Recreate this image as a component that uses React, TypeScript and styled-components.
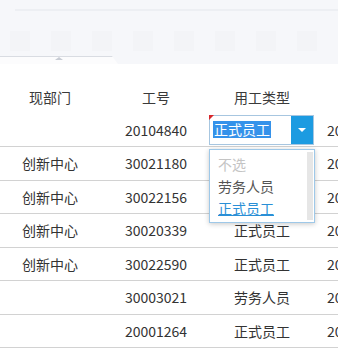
import React from "react";
import styled, { createGlobalStyle } from "styled-components";

const GlobalStyle = createGlobalStyle`
  html, body {
    margin: 0;
    padding: 0;
    background: #fff;
    overflow: hidden;
  }
  body {
    font-family: "Noto Sans CJK SC", "Noto Sans", sans-serif;
  }
`;

const Page = styled.div`
  width: 338px;
  height: 358px;
  overflow: hidden;
  display: flex;
  flex-direction: column;
`;

const TopBar = styled.div`
  height: 64px;
  background: #f6f7fa;
  display: flex;
  flex-direction: column;
  flex-shrink: 0;
`;

const TopLine = styled.div`
  margin: 9px 0 0 15px;
  height: 2px;
  background: #edeff3;
`;

const GhostRow = styled.div`
  display: flex;
  gap: 21px;
  padding: 20px 0 0 10px;
  height: 20px;
`;

const GhostBox = styled.div`
  width: 20px;
  height: 20px;
  background: #f3f4f7;
`;

const Tab = styled.div`
  margin-top: auto;
  width: 118px;
  height: 7px;
  background: #fcfcfd;
  border-top: 1px solid #d9dce2;
  clip-path: polygon(0 0, 112px 0, 118px 100%, 0 100%);
  display: flex;
  justify-content: center;
`;

const Caret = styled.div`
  width: 0;
  height: 0;
  border-left: 4px solid transparent;
  border-right: 4px solid transparent;
  border-bottom: 3px solid #c8ccd4;
`;

const Table = styled.div`
  margin: 16px 0 0 -3px;
  display: flex;
  flex-direction: column;
  font-size: 14px;
  color: #333;
`;

const Row = styled.div<{ $header?: boolean }>`
  display: grid;
  grid-template-columns: repeat(4, 106px);
  height: 33.5px;
  box-sizing: border-box;
  border-bottom: ${(p) => (p.$header ? "none" : "1px solid #d2d2d2")};
  color: ${(p) => (p.$header ? "#3a3a3a" : "#333")};
`;

const Cell = styled.div<{ $align?: "left" | "center" }>`
  position: relative;
  display: flex;
  align-items: center;
  justify-content: ${(p) => (p.$align === "left" ? "flex-start" : "center")};
  padding-left: ${(p) => (p.$align === "left" ? "12px" : "0")};
  white-space: nowrap;
  line-height: 20px;
`;

const Select = styled.div`
  position: absolute;
  left: 0;
  top: 1px;
  right: 1px;
  bottom: 1px;
  display: flex;
  border: 1px solid #a7c6e0;
  background: #fff;
  box-sizing: border-box;
`;

const RedMark = styled.div`
  position: absolute;
  left: -1px;
  top: -1px;
  width: 0;
  height: 0;
  border-top: 5px solid #d8262b;
  border-right: 5px solid transparent;
`;

const SelectValue = styled.div`
  flex: 1;
  display: flex;
  align-items: center;
  padding-left: 3px;
`;

const Highlight = styled.span`
  background: #3592ea;
  color: #fff;
  line-height: 17px;
  padding: 0 1px;
`;

const SelectButton = styled.div`
  width: 22px;
  background: #1c9be1;
  display: flex;
  align-items: center;
  justify-content: center;
`;

const DownArrow = styled.div`
  width: 0;
  height: 0;
  border-left: 4px solid transparent;
  border-right: 4px solid transparent;
  border-top: 4px solid #fff;
`;

const Menu = styled.div`
  position: absolute;
  left: 0;
  top: 35px;
  width: 106px;
  box-sizing: border-box;
  border: 1px solid #9ec8e8;
  background: #fff;
  box-shadow: 0 1px 5px rgba(0, 0, 0, 0.22);
  display: flex;
  z-index: 2;
`;

const MenuList = styled.div`
  flex: 1;
  padding: 3px 0 3px 8px;
  display: flex;
  flex-direction: column;
`;

const MenuItem = styled.div<{ $kind?: "muted" | "active" }>`
  height: 22px;
  line-height: 22px;
  color: ${(p) =>
    p.$kind === "muted" ? "#c4c4c4" : p.$kind === "active" ? "#2a8fd6" : "#555"};
  text-decoration: ${(p) => (p.$kind === "active" ? "underline" : "none")};
`;

const ScrollTrack = styled.div`
  width: 6px;
  margin: 2px 1px 2px 0;
  background: #e6e6e6;
`;

const rows = [
  ["", "20104840", "select", "2020-07-01"],
  ["创新中心", "30021180", "正式员工", "2020-07-01"],
  ["创新中心", "30022156", "正式员工", "2020-07-01"],
  ["创新中心", "30020339", "正式员工", "2020-07-01"],
  ["创新中心", "30022590", "正式员工", "2020-07-01"],
  ["", "30003021", "劳务人员", "2020-07-01"],
  ["", "20001264", "正式员工", "2020-07-01"],
  ["人力资源", "30018845", "正式员工", "2020-07-01"],
];

const App = () => {
  return (
    <Page>
      <GlobalStyle />
      <TopBar>
        <TopLine />
        <GhostRow>
          {[0, 1, 2, 3, 4, 5, 6, 7].map((i) => (
            <GhostBox key={i} />
          ))}
        </GhostRow>
        <Tab>
          <Caret />
        </Tab>
      </TopBar>

      <Table>
        <Row $header>
          <Cell>现部门</Cell>
          <Cell>工号</Cell>
          <Cell>用工类型</Cell>
          <Cell />
        </Row>
        {rows.map((r, i) => (
          <Row key={i}>
            <Cell>{r[0]}</Cell>
            <Cell>{r[1]}</Cell>
            {r[2] === "select" ? (
              <Cell>
                <Select>
                  <RedMark />
                  <SelectValue>
                    <Highlight>正式员工</Highlight>
                  </SelectValue>
                  <SelectButton>
                    <DownArrow />
                  </SelectButton>
                </Select>
                <Menu>
                  <MenuList>
                    <MenuItem $kind="muted">不选</MenuItem>
                    <MenuItem>劳务人员</MenuItem>
                    <MenuItem $kind="active">正式员工</MenuItem>
                  </MenuList>
                  <ScrollTrack />
                </Menu>
              </Cell>
            ) : (
              <Cell>{r[2]}</Cell>
            )}
            <Cell $align="left">{r[3]}</Cell>
          </Row>
        ))}
      </Table>
    </Page>
  );
};

export default App;
